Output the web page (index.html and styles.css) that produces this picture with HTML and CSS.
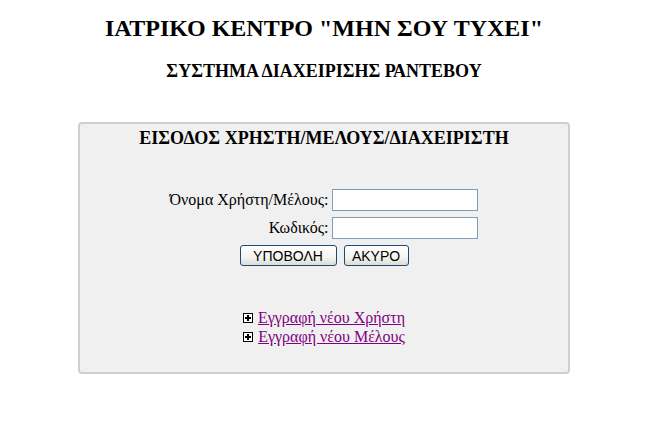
FILE: index.html
```html
<!DOCTYPE html>
<html lang="el">
<head>
<meta charset="utf-8">
<title>ΙΑΤΡΙΚΟ ΚΕΝΤΡΟ</title>
<link rel="stylesheet" href="styles.css">
</head>
<body>
<div class="page">
  <h1 class="title">ΙΑΤΡΙΚΟ ΚΕΝΤΡΟ "ΜΗΝ ΣΟΥ ΤΥΧΕΙ"</h1>
  <h3 class="subtitle">ΣΥΣΤΗΜΑ ΔΙΑΧΕΙΡΙΣΗΣ ΡΑΝΤΕΒΟΥ</h3>
  <div class="login-box">
    <h4 class="box-title">ΕΙΣΟΔΟΣ ΧΡΗΣΤΗ/ΜΕΛΟΥΣ/ΔΙΑΧΕΙΡΙΣΤΗ</h4>
    <form class="login-form">
      <div class="form-grid">
        <label class="label" for="user">Όνομα Χρήστη/Μέλους:</label>
        <input class="field" id="user" type="text">
        <label class="label" for="pass">Κωδικός:</label>
        <input class="field" id="pass" type="password">
      </div>
      <div class="buttons">
        <button class="btn btn-submit" type="button">ΥΠΟΒΟΛΗ</button>
        <button class="btn btn-cancel" type="button">ΑΚΥΡΟ</button>
      </div>
    </form>
    <div class="links">
      <div class="link-row">
        <svg class="plus" width="10" height="10" viewBox="0 0 10 10"><rect x="0.5" y="0.5" width="9" height="9" fill="#fff" stroke="#000"/><rect x="2" y="4" width="6" height="2" fill="#000"/><rect x="4" y="2" width="2" height="6" fill="#000"/></svg>
        <a class="link" href="#">Εγγραφή νέου Χρήστη</a>
      </div>
      <div class="link-row">
        <svg class="plus" width="10" height="10" viewBox="0 0 10 10"><rect x="0.5" y="0.5" width="9" height="9" fill="#fff" stroke="#000"/><rect x="2" y="4" width="6" height="2" fill="#000"/><rect x="4" y="2" width="2" height="6" fill="#000"/></svg>
        <a class="link" href="#">Εγγραφή νέου Μέλους</a>
      </div>
    </div>
  </div>
</div>
</body>
</html>
```
FILE: styles.css
```css
html, body {
  background: #ffffff;
}
body {
  margin: 0;
  font-family: "Liberation Serif", "Times New Roman", serif;
  color: #000;
}
.page {
  padding: 8px 87px 8px 78px;
  display: flex;
  flex-direction: column;
  align-items: stretch;
}
.title {
  font-size: 24px;
  font-weight: bold;
  text-align: center;
  margin: 7px 0 0 0;
  line-height: 27px;
}
.subtitle {
  font-size: 18px;
  font-weight: bold;
  text-align: center;
  margin: 19px 0 0 0;
  line-height: 20px;
}
.login-box {
  margin-top: 41px;
  width: 488px;
  background: #f0f0f0;
  border: 2px solid #cfcfcf;
  border-radius: 4px;
  padding: 4px 0 26px 0;
  display: flex;
  flex-direction: column;
  align-items: center;
}
.box-title {
  font-size: 18px;
  font-weight: bold;
  margin: 0;
  line-height: 20px;
  text-align: center;
}
.login-form {
  margin-top: 41px;
  display: flex;
  flex-direction: column;
  align-items: center;
}
.form-grid {
  display: grid;
  grid-template-columns: auto auto;
  column-gap: 4px;
  row-gap: 6px;
  align-items: center;
}
.label {
  font-size: 16px;
  text-align: right;
  line-height: 18px;
}
.field {
  box-sizing: border-box;
  width: 146px;
  height: 22px;
  margin: 0;
  border: 1px solid #7f9db9;
  background: #fff;
  padding: 1px 2px;
  font-family: "Liberation Sans", Arial, sans-serif;
  font-size: 13px;
}
.buttons {
  margin-top: 6px;
  display: flex;
  gap: 7px;
}
.btn {
  box-sizing: border-box;
  height: 21px;
  margin: 0;
  padding: 0 4px;
  font-family: "Liberation Sans", Arial, sans-serif;
  font-size: 14px;
  color: #000;
  border: 1px solid #1d4a74;
  border-radius: 3px;
  background: linear-gradient(#ffffff, #f4f4f0 60%, #dcdcd4);
  line-height: 18px;
}
.btn-submit {
  width: 97px;
}
.btn-cancel {
  width: 65px;
}
.links {
  margin-top: 42px;
  display: flex;
  flex-direction: column;
  align-items: center;
}
.link-row {
  display: flex;
  align-items: center;
  gap: 5px;
  font-size: 16px;
  line-height: 19px;
}
.plus {
  display: block;
  margin-top: 1px;
}
.link {
  color: #800080;
  text-decoration: underline;
}
```
